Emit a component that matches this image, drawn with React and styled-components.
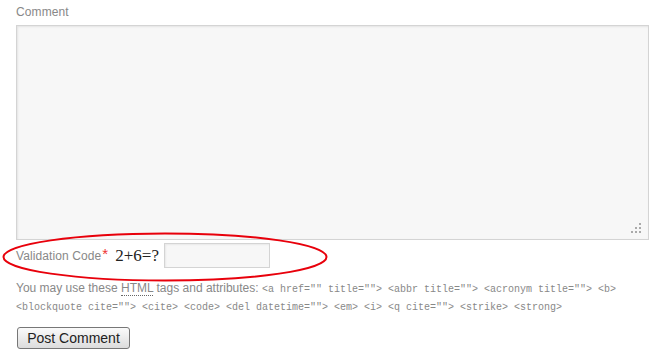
import React from "react";
import styled, { createGlobalStyle } from "styled-components";

const GlobalStyle = createGlobalStyle`
	body {
		margin: 0;
		background: #fff;
		font-family: "Liberation Sans", Arial, sans-serif;
	}
`;

const App = () => {
	return (
		<>
			<GlobalStyle />
			<Wrapper>
				<Label htmlFor="comment">Comment</Label>
				<AreaBox>
					<TextArea id="comment" />
					<Grip width="12" height="12" viewBox="0 0 12 12">
						<rect x="8" y="0" width="2" height="2" />
						<rect x="4" y="4" width="2" height="2" />
						<rect x="8" y="4" width="2" height="2" />
						<rect x="0" y="8" width="2" height="2" />
						<rect x="4" y="8" width="2" height="2" />
						<rect x="8" y="8" width="2" height="2" />
					</Grip>
				</AreaBox>

				<CodeRow>
					<Ring width="328" height="52" viewBox="0 0 328 52">
						<ellipse cx="164" cy="26" rx="161.5" ry="23.5" />
					</Ring>
					<Label htmlFor="code" $inline>
						Validation Code<Req>*</Req>
					</Label>
					<Sum>2+6=?</Sum>
					<CodeInput id="code" type="text" />
				</CodeRow>

				<Help>
					You may use these <abbr title="HyperText Markup Language">HTML</abbr> tags and attributes:{" "}
					<code>
						&lt;a href="" title=""&gt; &lt;abbr title=""&gt; &lt;acronym title=""&gt; &lt;b&gt; &lt;blockquote cite=""&gt; &lt;cite&gt; &lt;code&gt; &lt;del datetime=""&gt; &lt;em&gt; &lt;i&gt; &lt;q cite=""&gt; &lt;strike&gt; &lt;strong&gt;
					</code>
				</Help>

				<Submit type="button">Post Comment</Submit>
			</Wrapper>
		</>
	);
};

const Wrapper = styled.div`
	padding: 3px 7px 0 16px;
	width: 633px;
`;

const Label = styled.label`
	display: ${(p) => (p.$inline ? "inline-block" : "block")};
	font-size: 12px;
	letter-spacing: 0.1px;
	line-height: 18px;
	color: #888;
`;

const AreaBox = styled.div`
	position: relative;
	margin-top: 4px;
	height: 215px;
`;

const TextArea = styled.textarea`
	display: block;
	box-sizing: border-box;
	width: 633px;
	height: 215px;
	margin: 0;
	padding: 4px;
	background: #f7f7f7;
	border: 1px solid #d4d4d4;
	box-shadow: inset 1px 1px 2px rgba(0, 0, 0, 0.08);
	resize: none;
	outline: none;
`;

const Grip = styled.svg`
	position: absolute;
	right: 6px;
	bottom: 5px;
	fill: #aaa;
`;

const CodeRow = styled.div`
	position: relative;
	display: flex;
	align-items: center;
	height: 25px;
	margin-top: 3px;
`;

const Ring = styled.svg`
	position: absolute;
	left: -15px;
	top: -12px;
	pointer-events: none;

	ellipse {
		fill: none;
		stroke: #e8000b;
		stroke-width: 2;
	}
`;

const Req = styled.span`
	color: #e33;
	font-size: 15px;
	position: relative;
	top: -1px;
	margin-left: 1px;
`;

const Sum = styled.span`
	font-family: "Liberation Serif", "Times New Roman", serif;
	font-size: 17px;
	color: #222;
	margin: 0 5px 0 7px;
`;

const CodeInput = styled.input`
	box-sizing: border-box;
	width: 106px;
	height: 25px;
	margin: 0;
	background: #f7f7f7;
	border: 1px solid #d4d4d4;
	box-shadow: inset 1px 1px 2px rgba(0, 0, 0, 0.06);
	outline: none;
`;

const Help = styled.p`
	margin: 12px 0 0;
	font-size: 12px;
	line-height: 17px;
	color: #888;

	abbr {
		text-decoration: none;
		border-bottom: 1px dotted #666;
	}

	code {
		font-family: "Liberation Mono", "DejaVu Sans Mono", monospace;
		font-size: 10px;
		color: #888;
	}
`;

const Submit = styled.button`
	display: block;
	margin: 11px 0 0 1px;
	width: 113px;
	height: 22px;
	padding: 0;
	font-family: "Liberation Sans", Arial, sans-serif;
	font-size: 14px;
	color: #222;
	background: linear-gradient(#fafafa, #dcdcdc);
	border: 1px solid #777;
	border-radius: 3px;
	cursor: pointer;
`;

export default App;
